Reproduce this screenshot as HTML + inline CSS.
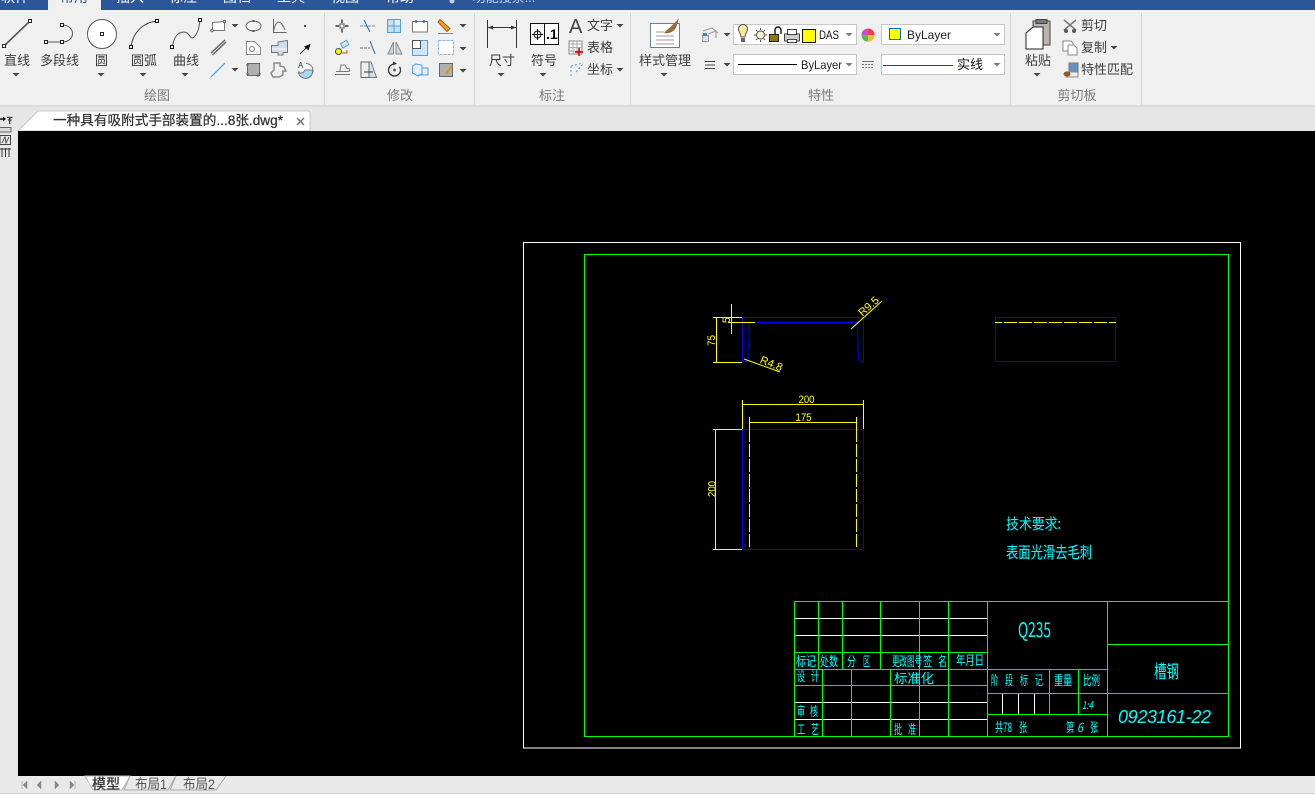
<!DOCTYPE html>
<html><head><meta charset="utf-8">
<style>
html,body{margin:0;padding:0;background:#f0f0f0;width:1315px;height:794px;overflow:hidden}
svg{display:block;position:absolute;left:0;top:0}
text{font-family:"Liberation Sans","Noto Sans CJK SC",sans-serif}
.l{font-size:13px;fill:#3c3c3c;text-anchor:middle}
.s{font-size:13px;fill:#3c3c3c}
.g{font-size:13px;fill:#7a7a7a;text-anchor:middle}
.t{font-size:14px;fill:#fff;text-anchor:middle}
.ic{fill:none;stroke:#666;stroke-width:1}
.cad text{fill:#0ff;font-family:"WenQuanYi Zen Hei","Noto Sans CJK SC",sans-serif;font-size:13px}
.y text{fill:#ff0;font-family:"Liberation Sans",sans-serif;font-size:11px;text-anchor:middle}
</style></head><body>
<svg width="1315" height="794" viewBox="0 0 1315 794" xmlns="http://www.w3.org/2000/svg">
<defs><path id="c" d="M-3.500 0h7l-3.500 3.500z" fill="#444"/></defs>
<rect width="1315" height="794" fill="#f0f0f0"/>
<!-- title bar -->
<rect width="1315" height="10" fill="#2b579a"/>
<rect x="48" width="53" height="11" fill="#f0f0f0"/>
<text class="t" x="15" y="2">软件</text>
<text class="t" x="74" y="2" style="fill:#2b579a">常用</text>
<text class="t" x="130" y="2">插入</text>
<text class="t" x="183" y="2">标注</text>
<text class="t" x="237" y="2">图档</text>
<text class="t" x="291" y="2">工具</text>
<text class="t" x="345" y="2">视图</text>
<text class="t" x="400" y="2">帮助</text>
<circle cx="452" cy="1" r="2.500" fill="#ccd"/>
<text class="t" x="504" y="2" style="fill:#c6d2e6;font-size:13px">功能搜索...</text>
<rect y="106" width="1315" height="25" fill="#e6e6e6"/>
<rect y="131" width="18" height="645" fill="#e8e8e8"/>
<rect y="105" width="1315" height="2" fill="#dcdcdc"/>
<!-- dividers -->
<g stroke="#d6d6d6"><path d="M324.500 13V105M474.500 13V105M630.500 13V105M1010.500 13V105M1141.500 13V105"/></g>

<!-- Draw panel -->
<path d="M4 46L30 21" stroke="#555" stroke-width="1.600"/>
<g fill="#fff" stroke="#222"><rect x="2.500" y="44.500" width="3" height="3"/><rect x="28.500" y="19.500" width="3" height="3"/></g>
<path d="M46 42H62C76 42 76 25 62 25" fill="none" stroke="#555"/>
<g fill="#fff" stroke="#222"><rect x="44.500" y="40.500" width="3" height="3"/><rect x="60.500" y="40.500" width="3" height="3"/><rect x="60.500" y="23.500" width="3" height="3"/></g>
<circle cx="102" cy="34" r="14.500" fill="#fff" stroke="#555"/><rect x="100.500" y="32.500" width="3" height="3" fill="#fff" stroke="#222"/>
<path d="M131 47C133 31 145 22 157 21" fill="none" stroke="#444"/>
<g fill="#fff" stroke="#111"><rect x="129.500" y="45.500" width="3" height="3"/><rect x="155.500" y="19.500" width="3" height="3"/></g>
<path d="M172 48C174 36 178 32 184 32C190 32 190 41 194 37C198 33 199 28 200 20" fill="none" stroke="#555"/>
<g fill="#fff" stroke="#111"><rect x="170.500" y="45.500" width="3" height="3"/><rect x="198.500" y="18.500" width="3" height="3"/></g>
<text class="l" x="17" y="65">直线</text><text class="l" x="59.500" y="65">多段线</text><text class="l" x="101.500" y="65">圆</text><text class="l" x="144" y="65">圆弧</text><text class="l" x="186" y="65">曲线</text>
<use href="#c" x="16" y="73"/><use href="#c" x="101" y="73"/><use href="#c" x="143" y="73"/><use href="#c" x="185" y="73"/>
<text class="g" x="157" y="100">绘图</text>
<path d="M212.500 22.500L224.500 21.500V30.500H212.500Z" fill="#fff" stroke="#777"/><circle cx="212" cy="30.500" r="1.300" fill="#fff" stroke="#666"/><circle cx="224.500" cy="21.500" r="1.300" fill="#fff" stroke="#666"/><use href="#c" x="235" y="24"/>
<ellipse cx="253.500" cy="26" rx="7.500" ry="5" fill="#f4f4f4" stroke="#666"/><rect x="252.500" y="20" width="2" height="2" fill="#555"/><rect x="252.500" y="30" width="2" height="2" fill="#555"/>
<path d="M273.500 19V32.500H286.500M274 30C276 19 281 20 285 30" class="ic"/>
<rect x="304" y="25" width="2" height="2" fill="#444"/>
<path d="M211 53L225 40M212.500 55L226 42" stroke="#666" stroke-width="1.500"/>
<path d="M246.500 41.500H254.500L260.500 47.500V54.500H246.500Z" fill="#fafafa" stroke="#888"/><circle cx="252" cy="49" r="2.500" fill="none" stroke="#777"/>
<path d="M271.500 45.500H278V42L287.500 40.500V52.500H283V55H278V52.500H271.500Z" fill="#cfdcea" stroke="#777"/><path d="M272 49H287" stroke="#fff"/>
<path d="M300 54L306 48" stroke="#333"/><path d="M304 46.500L310.500 44L308.500 50.500Z" fill="#111"/>
<path d="M211 77L225 63" stroke="#3aa0e0" stroke-width="1.200"/><use href="#c" x="235" y="68"/>
<rect x="247.500" y="63.500" width="12" height="12" fill="#b0b0b0" stroke="#666"/><path d="M246 65H249M246 74H249M258 74H261M258 77V74" stroke="#666"/>
<path d="M274 63H280V66L284 67L286 71H283V75L279 77H273L271 73L274 70Z" fill="none" stroke="#8a8a8a" stroke-width="1.500"/>
<path d="M306 63.500A7 7 0 1 1 299 71" fill="#fff" stroke="#777"/><path d="M305 70H312.500A7 7 0 0 1 298.500 72.500C302 74 304 72 305 70Z" fill="#a5daf2" stroke="#777"/>
<text x="298" y="68" style="font-size:8px;fill:#333">A</text>

<!-- Modify panel -->
<g class="ic">
<rect x="340" y="24" width="4" height="4" fill="#fff" stroke="#555"/><path d="M342 19.500V23M342 29V32.500M335.500 26H339M345 26H348.500" stroke="#333" stroke-width="1.400"/>
<path d="M360 26H376" stroke="#888" stroke-dasharray="3 1"/><path d="M364 20L370 32" stroke="#1a60c0"/>
<rect x="387.500" y="19.500" width="13" height="13" fill="#bfe0f8" stroke="#5a9fd4"/><rect x="394" y="19.500" width="6.500" height="6.500" fill="#dceefa" stroke="#5a9fd4"/><path d="M394 19V33M387 26H401" stroke="#5a9fd4"/>
<rect x="412.500" y="21.500" width="15" height="10.500" fill="#fff" stroke="#777"/><path d="M416 20V23M424 20V23" stroke="#1a60c0" stroke-width="1.400"/>
<path d="M440 19.500L450 28.500L447 31.500L438 22Z" fill="#f0a020" stroke="#a06010"/><path d="M438 33.500H453" stroke="#888"/>
<circle cx="338.500" cy="51.500" r="3" fill="#ff0" stroke="#444"/><rect x="341" y="42" width="7" height="5" fill="#cfe6f5" stroke="#5a9fd4" transform="rotate(-30 344 44)"/><path d="M347 50V53H342" stroke="#c05030"/>
<path d="M360 48H370" stroke="#666" stroke-dasharray="3 1"/><path d="M370 41L375 54" stroke="#1a60c0"/>
<path d="M393.500 42V54L388 54ZM396 42L402 54H396Z" fill="#ccd8e2" stroke="#888"/>
<rect x="412.500" y="40.500" width="15" height="15" fill="#cbe7fb" stroke="#5a9fd4"/><rect x="412.500" y="40.500" width="8" height="8" fill="#fff" stroke="#555"/>
<rect x="438.500" y="40.500" width="15" height="14" fill="#fff" stroke="#8ab8de" stroke-dasharray="3 1"/>
<path d="M335 74.500H350M336 71.500H346C351 72 351 68 347 68.500L345 65H341L340 71" stroke="#777"/>
<path d="M361 62H371L376.500 77.500H361Z" fill="#cfe3f3" stroke="#777"/><rect x="361" y="62" width="8" height="15.500" fill="#eee" stroke="#666"/><path d="M364 72H373" stroke="#333"/>
<circle cx="394.500" cy="70" r="6" stroke="#333" stroke-width="1.300" stroke-dasharray="28 6"/><path d="M393 61.500L397 63.500L393 65.500Z" fill="#333" stroke="none"/><circle cx="394.500" cy="70" r="1" fill="#333"/>
<path d="M412.500 66L416 64L422 65V74L418 76L412.500 73ZM422 68H428V75H418" stroke="#5a9fd4" fill="#e2f0fa"/>
<rect x="439.500" y="63.500" width="13" height="13" fill="#b0b0b0" stroke="#666"/><path d="M446 74L452 66" stroke="#e09020" stroke-width="2"/>
</g>
<use href="#c" x="463" y="24"/><use href="#c" x="463" y="47"/><use href="#c" x="463" y="69"/>
<text class="g" x="400" y="100">修改</text>

<!-- Annotation -->
<path d="M487.500 20V48M516.500 20V48M488 27.500H516" stroke="#333"/><path d="M488 27.500l5-2v4zM516 27.500l-5-2v4z" fill="#333"/>
<text class="l" x="502" y="65">尺寸</text><use href="#c" x="501" y="73"/>
<rect x="530.500" y="23.500" width="28" height="21" fill="#fff" stroke="#111"/><path d="M544.500 23V44" stroke="#111"/>
<circle cx="537.500" cy="34.500" r="3.500" fill="none" stroke="#111"/><path d="M532 34.500H543M537.500 29V40" stroke="#111"/>
<text x="546" y="39" style="font-size:14px;font-weight:bold;fill:#000">.1</text>
<text class="l" x="544" y="65">符号</text><use href="#c" x="543" y="73"/>
<text x="569" y="33" style="font-size:20px;fill:#444">A</text><text class="s" x="587" y="30">文字</text><use href="#c" x="620" y="24"/>
<rect x="569" y="41" width="13" height="13" fill="#fff" stroke="#888"/><path d="M569 44H582M569 47.500H582M569 51H582M573 41V54M577 41V54" stroke="#aaa"/><path d="M575 52H583M579 48V56" stroke="#c00" stroke-width="1.500"/>
<text class="s" x="587" y="52">表格</text>
<path d="M571 66L583 63M571 66V76M576 72L583 64" stroke="#5a9fd4" stroke-dasharray="2 2" fill="none"/><text class="s" x="587" y="74">坐标</text><use href="#c" x="620" y="68"/>
<text class="g" x="552" y="100">标注</text>

<!-- Properties -->
<rect x="650.500" y="23.500" width="29" height="24" fill="#fff" stroke="#6a8294"/>
<path d="M656 36H674M656 40H674M656 44H674M656 32H664" stroke="#999"/>
<path d="M664 33C669 28 674 24 679 18L676 28C673 32 669 34 664 33Z" fill="#9a6a3c"/>
<text class="l" x="665" y="65">样式管理</text><use href="#c" x="664" y="73"/>
<path d="M703 31L712 28L718 33M708 34L716 31V38" fill="none" stroke="#999"/><rect x="702.500" y="35.500" width="6" height="6" fill="#dde" stroke="#999"/><rect x="703" y="33" width="4" height="3" fill="#4a7fc0"/>
<use href="#c" x="727" y="33"/>
<rect x="733.500" y="24.500" width="123" height="20" fill="#fff" stroke="#c6c6c6"/>
<path d="M739 31A4.500 4.500 0 1 1 747 31C746 34 745 35 745 37H741C741 35 740 34 739 31Z" fill="#ffe9a0" stroke="#555"/><rect x="741" y="38" width="4" height="4" fill="#666"/>
<circle cx="760.500" cy="35" r="4" fill="#fff6d0" stroke="#555"/><path d="M754 35H756M765 35H767M760.500 28V30M760.500 40V42M756 30L757.500 31.500M765 30L763.500 31.500M756 40L757.500 38.500M765 40L763.500 38.500" stroke="#555"/>
<rect x="769.500" y="34.500" width="9" height="7" fill="#8a7a10" stroke="#222"/><path d="M775 34V30A2.500 2.500 0 0 1 781 30V34" fill="none" stroke="#111" stroke-width="1.400"/>
<rect x="784.500" y="34" width="15" height="7" fill="#ccc" stroke="#444"/><rect x="787.500" y="29.500" width="9" height="5" fill="#fff" stroke="#444"/><rect x="787.500" y="39.500" width="9" height="3" fill="#fff" stroke="#444"/>
<rect x="802.500" y="29.500" width="13" height="13" fill="#ff0" stroke="#111"/>
<text x="819" y="39" style="font-size:12px;fill:#111" textLength="20" lengthAdjust="spacingAndGlyphs">DAS</text>
<use href="#c" x="849" y="33" style="opacity:.7"/>
<circle cx="868" cy="35" r="6.500" fill="#c050d0"/><path d="M868 35V28.500A6.500 6.500 0 0 1 874.500 35Z" fill="#f04040"/><path d="M868 35H874.500A6.500 6.500 0 0 1 868 41.500Z" fill="#f0c030"/><path d="M868 35V41.500A6.500 6.500 0 0 1 861.500 35Z" fill="#50c050"/>
<rect x="881.500" y="24.500" width="123" height="20" fill="#fff" stroke="#c6c6c6"/>
<rect x="889.500" y="28.500" width="11" height="11" fill="#ff0" stroke="#0070c0"/>
<text x="907" y="39" style="font-size:12px;fill:#222">ByLayer</text><use href="#c" x="997" y="33" style="opacity:.7"/>
<path d="M705 61.500H715M705 65H715M705 68.500H715" stroke="#444"/><use href="#c" x="727" y="63"/>
<rect x="733.500" y="54.500" width="123" height="20" fill="#fff" stroke="#c6c6c6"/>
<path d="M738 64.500H797" stroke="#000"/><text x="801" y="69" style="font-size:12px;fill:#222" textLength="41" lengthAdjust="spacingAndGlyphs">ByLayer</text><use href="#c" x="849" y="63" style="opacity:.7"/>
<path d="M862 61.500H874" stroke="#777"/><path d="M862 64.500H874M862 67.500H874" stroke="#777" stroke-dasharray="2 1"/>
<rect x="881.500" y="54.500" width="123" height="20" fill="#fff" stroke="#c6c6c6"/>
<path d="M883 65.500H953" stroke="#d00000"/><text x="957" y="69" style="font-size:13px;fill:#111">实线</text><use href="#c" x="997" y="63" style="opacity:.7"/>
<text class="g" x="821" y="100">特性</text>

<!-- Clipboard -->
<path d="M1033 21H1050V45H1033Z" fill="#b8b4aa" stroke="#444"/><rect x="1036" y="19.500" width="11" height="4" fill="#777" stroke="#444"/>
<path d="M1026 33L1033 27H1043V49H1026Z" fill="#fff" stroke="#222"/>
<text class="l" x="1038" y="65">粘贴</text><use href="#c" x="1037" y="73"/>
<path d="M1064 20L1076 30M1076 20L1064 30" stroke="#777" stroke-width="1.500"/><circle cx="1066" cy="31" r="2" fill="#555"/><circle cx="1074" cy="31" r="2" fill="#555"/>
<text class="s" x="1081" y="30">剪切</text>
<path d="M1063 41H1071L1073 43V51H1063Z" fill="#fff" stroke="#888"/><path d="M1068 45H1074L1077 48V55H1068Z" fill="#fff" stroke="#888"/>
<text class="s" x="1081" y="52">复制</text><use href="#c" x="1114" y="46"/>
<rect x="1069" y="63" width="9" height="9" fill="#6a90c0" stroke="#777"/><rect x="1066" y="72" width="12" height="5" fill="#eee" stroke="#888"/><ellipse cx="1067" cy="74" rx="3.500" ry="2.500" fill="#8a5a30"/>
<text class="s" x="1081" y="74">特性匹配</text>
<text class="g" x="1077" y="100">剪切板</text>

<!-- doc tab -->
<path d="M18 131L38 111H308Q310 111 310 113V131Z" fill="#fff" stroke="#c8c8c8"/>
<text x="53" y="125" style="font-size:13.500px;fill:#333;stroke:#333;stroke-width:.25" textLength="230" lengthAdjust="spacingAndGlyphs">一种具有吸附式手部装置的...8张.dwg*</text>
<path d="M297 118L304 125M304 118L297 125" stroke="#777" stroke-width="1.500"/>

<!-- left strip -->
<path d="M0 119H4" stroke="#111" stroke-width="1.500"/><path d="M3 116.500L6 119L3 121.500Z" fill="#111"/>
<path d="M7 117.500H12.500M8 120H11.500M9.700 118V124" stroke="#333" stroke-width="1.300"/>
<rect x="-1" y="127.500" width="12" height="4.500" fill="#ddd" stroke="#444" stroke-width=".8"/>
<rect x="0" y="135.500" width="10.500" height="9" fill="none" stroke="#444"/><path d="M2 143L5 137L6 143L9 137" stroke="#333" stroke-width=".8" fill="none"/>
<path d="M0 149H11M2 148V157M5.500 148V157M9 148V157" stroke="#333"/>

<!-- canvas -->
<rect x="18" y="131" width="1297" height="645" fill="#000"/>
<rect x="0" y="776" width="1315" height="18" fill="#e9e9e9"/>
<path d="M0 793.500H1315" stroke="#d0d0d0"/>
<path d="M22 781V789M23 785l4-4v8zM41 781l-4 4 4 4zM55 781l4 4-4 4zM70 781l4 4-4 4zM75 781V789" fill="#888" stroke="#888" stroke-width=".5"/>
<path d="M85 776L93 790H122L130 776Z" fill="#fff" stroke="#bbb"/>
<text x="92" y="789" style="font-size:14px;fill:#333;stroke:#333;stroke-width:.3">模型</text>
<path d="M130 776L124 790H168L176 776M176 776L170 790H216L226 776" fill="none" stroke="#aaa"/>
<text x="135" y="789" style="font-size:14px;fill:#555" textLength="32" lengthAdjust="spacingAndGlyphs">布局1</text>
<text x="183" y="789" style="font-size:14px;fill:#555" textLength="32" lengthAdjust="spacingAndGlyphs">布局2</text>

<!-- CAD -->
<g fill="none" shape-rendering="crispEdges">
<rect x="523.500" y="242.500" width="717" height="505.500" stroke="#fff"/>
<rect x="584.500" y="254.500" width="644" height="482" stroke="#0f0"/>
<g stroke="#fff">
<path d="M794.500 618.500H987M794.500 635.500H987M794.500 702.500H987M794.500 719.500H987M1002.500 693V714M1018.500 693V714M1034.500 693V714"/>
</g>
<g stroke="#0f0">
<path d="M794.500 601.500H1228M794.500 652.500H987M794.500 669.500H1107M794.500 685.500H987M1107 644.500H1228M987 693.500H1228M987 714.500H1107"/>
<path d="M794.500 601.500V736M818.500 601.500V669M842.500 601.500V669M880.500 601.500V669M919.500 601.500V736M948.500 601.500V736M987.500 601.500V736M822.500 669V736M851.500 669V736M890.500 669V736M1107.500 601.500V736M1049.500 669V714M1078.500 669V714"/>
</g>
<!-- blue -->
<g stroke="#0000ff">
<path d="M742.500 317.500H863.500M750 322.500H857M742.500 317V362M863.500 317V362"/>
<rect x="742.500" y="429.500" width="121" height="120"/>
<rect x="995.500" y="317.500" width="120" height="44"/>
</g>
<path d="M750 322L749 326V340L748 350V360L746 362H743M857 322V326L858 340V350L859 360L861 362H863" stroke="#0000ff" shape-rendering="auto"/>
<!-- yellow -->
<g stroke="#ff0">
<path d="M713 317.500H742M713 362.500H742M716.500 317V362M731.500 304V334M728 322.500H755"/>
<path d="M742.500 400V429M863.500 400V429M742 404.500H864M749.500 417V429M856.500 417V429M750 422.500H857"/>
<path d="M713 429.500H742M713 549.500H742M715.500 429V549"/>
<path d="M749.500 429V549M856.500 429V549" stroke-dasharray="13 2"/>
<path d="M995 322.500H1116" stroke-dasharray="7 2 13 2 13 2 13 2 13 2 13 2 13 2 13 2 13 2"/>
</g>
<path d="M851 329L882 301M744 359L780 372" stroke="#ff0" shape-rendering="auto"/>
</g>
<g class="y">
<text x="806.500" y="403" textLength="16" lengthAdjust="spacingAndGlyphs">200</text><text x="803.500" y="421" textLength="16" lengthAdjust="spacingAndGlyphs">175</text>
<text transform="translate(715 340.500) rotate(-90)" textLength="11" lengthAdjust="spacingAndGlyphs">75</text>
<text transform="translate(715.500 489) rotate(-90)" textLength="16" lengthAdjust="spacingAndGlyphs">200</text>
<text transform="translate(730 320) rotate(-90)">5</text>
<text transform="translate(871 309) rotate(-42)">R9.5</text>
<text transform="translate(770 367) rotate(22)">R4.8</text>
</g>
<g class="cad">
<text x="1006" y="529" style="font-size:15px" textLength="55" lengthAdjust="spacingAndGlyphs">技术要求:</text>
<text x="1006" y="558" style="font-size:16px" textLength="86" lengthAdjust="spacingAndGlyphs">表面光滑去毛刺</text>
<text x="796" y="666" textLength="20" lengthAdjust="spacingAndGlyphs">标记</text>
<text x="820" y="666" textLength="18" lengthAdjust="spacingAndGlyphs">处数</text>
<text x="847" y="666" textLength="9" lengthAdjust="spacingAndGlyphs">分</text>
<text x="863" y="666" textLength="7" lengthAdjust="spacingAndGlyphs">区</text>
<text x="892" y="666" textLength="30" lengthAdjust="spacingAndGlyphs">更改图号</text>
<text x="923" y="666" textLength="9" lengthAdjust="spacingAndGlyphs">签</text>
<text x="938" y="666" textLength="9" lengthAdjust="spacingAndGlyphs">名</text>
<text x="956" y="665" textLength="28" lengthAdjust="spacingAndGlyphs">年月日</text>
<text x="797" y="681" textLength="8" lengthAdjust="spacingAndGlyphs">设</text>
<text x="811" y="681" textLength="8" lengthAdjust="spacingAndGlyphs">计</text>
<text x="894" y="683" textLength="40" lengthAdjust="spacingAndGlyphs">标准化</text>
<text x="797" y="716" textLength="8" lengthAdjust="spacingAndGlyphs">审</text>
<text x="810" y="716" textLength="8" lengthAdjust="spacingAndGlyphs">核</text>
<text x="797" y="734" textLength="8" lengthAdjust="spacingAndGlyphs">工</text>
<text x="811" y="734" textLength="8" lengthAdjust="spacingAndGlyphs">艺</text>
<text x="894" y="734" textLength="8" lengthAdjust="spacingAndGlyphs">批</text>
<text x="908" y="734" textLength="8" lengthAdjust="spacingAndGlyphs">准</text>
<text x="991" y="685" textLength="7" lengthAdjust="spacingAndGlyphs">阶</text>
<text x="1005" y="685" textLength="8" lengthAdjust="spacingAndGlyphs">段</text>
<text x="1020" y="685" textLength="8" lengthAdjust="spacingAndGlyphs">标</text>
<text x="1035" y="685" textLength="8" lengthAdjust="spacingAndGlyphs">记</text>
<text x="1054" y="685" textLength="18" lengthAdjust="spacingAndGlyphs">重量</text>
<text x="1083" y="685" textLength="17" lengthAdjust="spacingAndGlyphs">比例</text>
<text x="1082" y="709" style="font-size:11px;font-style:italic" textLength="11" lengthAdjust="spacingAndGlyphs">1:4</text>
<text x="995" y="732" textLength="8" lengthAdjust="spacingAndGlyphs">共</text>
<text x="1003" y="732" textLength="9" lengthAdjust="spacingAndGlyphs">78</text>
<text x="1019" y="732" textLength="8" lengthAdjust="spacingAndGlyphs">张</text>
<text x="1066" y="732" textLength="8" lengthAdjust="spacingAndGlyphs">第</text>
<text x="1077" y="732" style="font-style:italic" textLength="6" lengthAdjust="spacingAndGlyphs">6</text>
<text x="1090" y="732" textLength="8" lengthAdjust="spacingAndGlyphs">张</text>
<text x="1018" y="637" style="font-size:20px" textLength="33" lengthAdjust="spacingAndGlyphs">Q235</text>
<text x="1154" y="678" style="font-size:18px" textLength="25" lengthAdjust="spacingAndGlyphs">槽钢</text>
<text x="1118" y="723" style="font-size:18px;font-style:italic;font-family:'Liberation Sans',sans-serif;font-weight:normal" textLength="93" lengthAdjust="spacing">0923161-22</text>
</g>
</svg>
</body></html>
